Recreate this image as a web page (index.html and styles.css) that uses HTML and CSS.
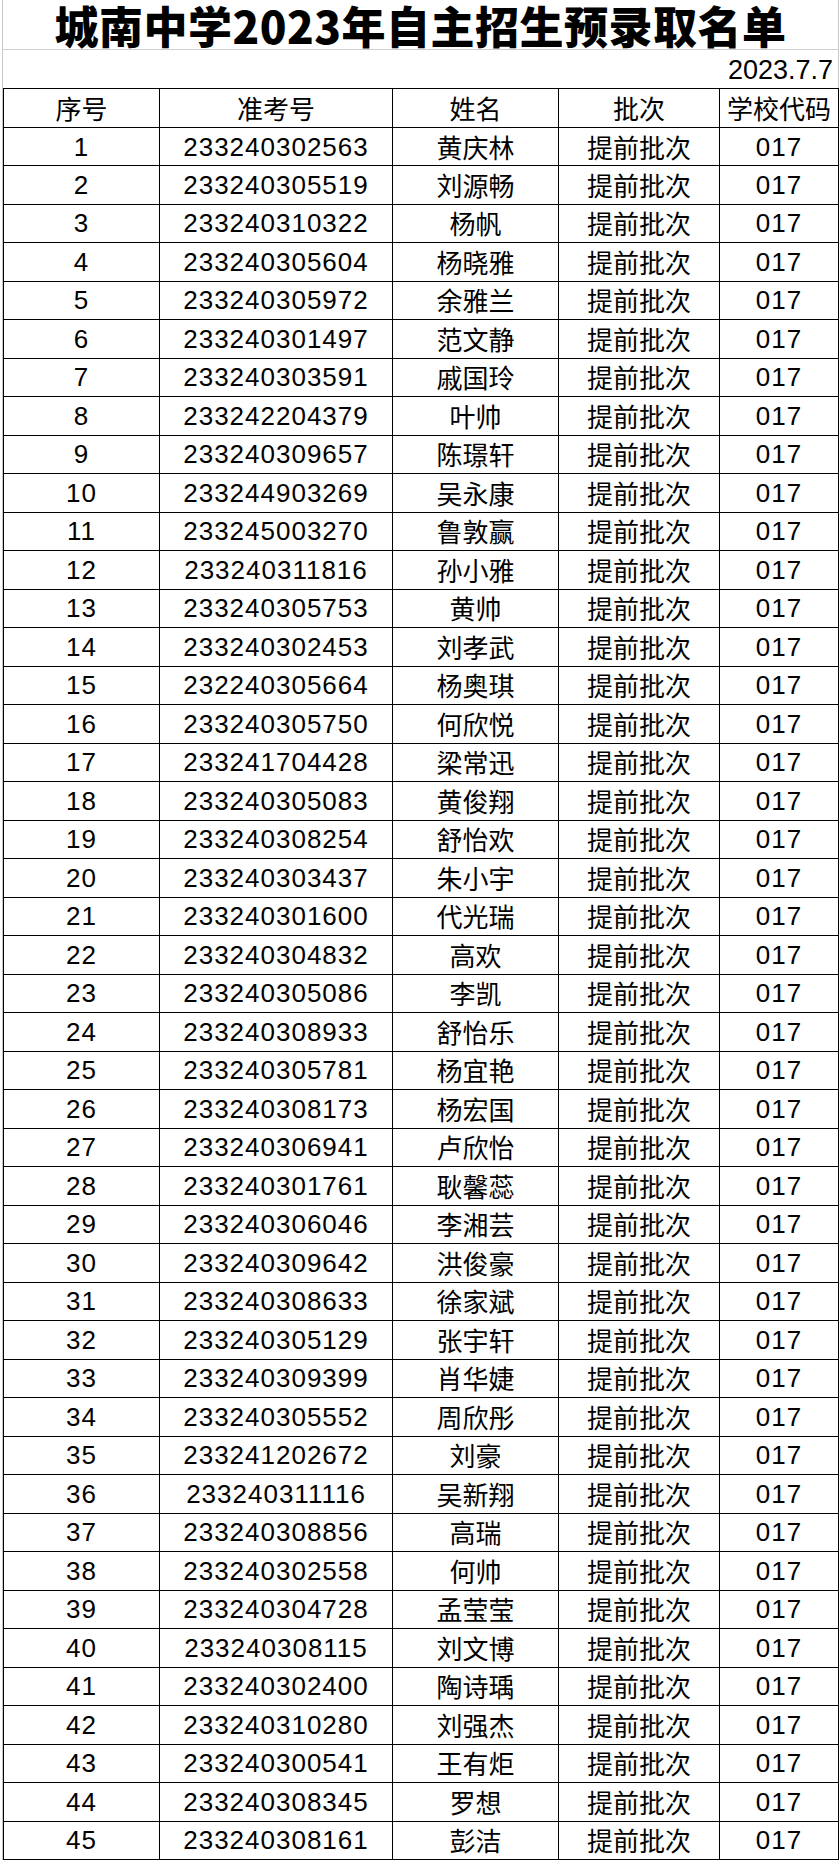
FILE: index.html
```html
<!DOCTYPE html>
<html lang="zh-CN">
<head>
<meta charset="utf-8">
<title>城南中学2023年自主招生预录取名单</title>
<link rel="stylesheet" href="styles.css">
</head>
<body>
<div class="sheet">
  <div class="frame">
    <h1 class="title">城南中学2023年自主招生预录取名单</h1>
    <div class="date">2023.7.7</div>
    <table class="roster">
      <colgroup>
        <col class="c-no"><col class="c-id"><col class="c-name"><col class="c-batch"><col class="c-code">
      </colgroup>
      <thead>
        <tr><th>序号</th><th>准考号</th><th>姓名</th><th>批次</th><th>学校代码</th></tr>
      </thead>
      <tbody>
        <tr><td>1</td><td class="num">233240302563</td><td>黄庆林</td><td>提前批次</td><td class="num">017</td></tr>
        <tr><td>2</td><td class="num">233240305519</td><td>刘源畅</td><td>提前批次</td><td class="num">017</td></tr>
        <tr><td>3</td><td class="num">233240310322</td><td>杨帆</td><td>提前批次</td><td class="num">017</td></tr>
        <tr><td>4</td><td class="num">233240305604</td><td>杨晓雅</td><td>提前批次</td><td class="num">017</td></tr>
        <tr><td>5</td><td class="num">233240305972</td><td>余雅兰</td><td>提前批次</td><td class="num">017</td></tr>
        <tr><td>6</td><td class="num">233240301497</td><td>范文静</td><td>提前批次</td><td class="num">017</td></tr>
        <tr><td>7</td><td class="num">233240303591</td><td>戚国玲</td><td>提前批次</td><td class="num">017</td></tr>
        <tr><td>8</td><td class="num">233242204379</td><td>叶帅</td><td>提前批次</td><td class="num">017</td></tr>
        <tr><td>9</td><td class="num">233240309657</td><td>陈璟轩</td><td>提前批次</td><td class="num">017</td></tr>
        <tr><td>10</td><td class="num">233244903269</td><td>吴永康</td><td>提前批次</td><td class="num">017</td></tr>
        <tr><td>11</td><td class="num">233245003270</td><td>鲁敦赢</td><td>提前批次</td><td class="num">017</td></tr>
        <tr><td>12</td><td class="num">233240311816</td><td>孙小雅</td><td>提前批次</td><td class="num">017</td></tr>
        <tr><td>13</td><td class="num">233240305753</td><td>黄帅</td><td>提前批次</td><td class="num">017</td></tr>
        <tr><td>14</td><td class="num">233240302453</td><td>刘孝武</td><td>提前批次</td><td class="num">017</td></tr>
        <tr><td>15</td><td class="num">232240305664</td><td>杨奥琪</td><td>提前批次</td><td class="num">017</td></tr>
        <tr><td>16</td><td class="num">233240305750</td><td>何欣悦</td><td>提前批次</td><td class="num">017</td></tr>
        <tr><td>17</td><td class="num">233241704428</td><td>梁常迅</td><td>提前批次</td><td class="num">017</td></tr>
        <tr><td>18</td><td class="num">233240305083</td><td>黄俊翔</td><td>提前批次</td><td class="num">017</td></tr>
        <tr><td>19</td><td class="num">233240308254</td><td>舒怡欢</td><td>提前批次</td><td class="num">017</td></tr>
        <tr><td>20</td><td class="num">233240303437</td><td>朱小宇</td><td>提前批次</td><td class="num">017</td></tr>
        <tr><td>21</td><td class="num">233240301600</td><td>代光瑞</td><td>提前批次</td><td class="num">017</td></tr>
        <tr><td>22</td><td class="num">233240304832</td><td>高欢</td><td>提前批次</td><td class="num">017</td></tr>
        <tr><td>23</td><td class="num">233240305086</td><td>李凯</td><td>提前批次</td><td class="num">017</td></tr>
        <tr><td>24</td><td class="num">233240308933</td><td>舒怡乐</td><td>提前批次</td><td class="num">017</td></tr>
        <tr><td>25</td><td class="num">233240305781</td><td>杨宜艳</td><td>提前批次</td><td class="num">017</td></tr>
        <tr><td>26</td><td class="num">233240308173</td><td>杨宏国</td><td>提前批次</td><td class="num">017</td></tr>
        <tr><td>27</td><td class="num">233240306941</td><td>卢欣怡</td><td>提前批次</td><td class="num">017</td></tr>
        <tr><td>28</td><td class="num">233240301761</td><td>耿馨蕊</td><td>提前批次</td><td class="num">017</td></tr>
        <tr><td>29</td><td class="num">233240306046</td><td>李湘芸</td><td>提前批次</td><td class="num">017</td></tr>
        <tr><td>30</td><td class="num">233240309642</td><td>洪俊豪</td><td>提前批次</td><td class="num">017</td></tr>
        <tr><td>31</td><td class="num">233240308633</td><td>徐家斌</td><td>提前批次</td><td class="num">017</td></tr>
        <tr><td>32</td><td class="num">233240305129</td><td>张宇轩</td><td>提前批次</td><td class="num">017</td></tr>
        <tr><td>33</td><td class="num">233240309399</td><td>肖华婕</td><td>提前批次</td><td class="num">017</td></tr>
        <tr><td>34</td><td class="num">233240305552</td><td>周欣彤</td><td>提前批次</td><td class="num">017</td></tr>
        <tr><td>35</td><td class="num">233241202672</td><td>刘豪</td><td>提前批次</td><td class="num">017</td></tr>
        <tr><td>36</td><td class="num">233240311116</td><td>吴新翔</td><td>提前批次</td><td class="num">017</td></tr>
        <tr><td>37</td><td class="num">233240308856</td><td>高瑞</td><td>提前批次</td><td class="num">017</td></tr>
        <tr><td>38</td><td class="num">233240302558</td><td>何帅</td><td>提前批次</td><td class="num">017</td></tr>
        <tr><td>39</td><td class="num">233240304728</td><td>孟莹莹</td><td>提前批次</td><td class="num">017</td></tr>
        <tr><td>40</td><td class="num">233240308115</td><td>刘文博</td><td>提前批次</td><td class="num">017</td></tr>
        <tr><td>41</td><td class="num">233240302400</td><td>陶诗瑀</td><td>提前批次</td><td class="num">017</td></tr>
        <tr><td>42</td><td class="num">233240310280</td><td>刘强杰</td><td>提前批次</td><td class="num">017</td></tr>
        <tr><td>43</td><td class="num">233240300541</td><td>王有炬</td><td>提前批次</td><td class="num">017</td></tr>
        <tr><td>44</td><td class="num">233240308345</td><td>罗想</td><td>提前批次</td><td class="num">017</td></tr>
        <tr><td>45</td><td class="num">233240308161</td><td>彭洁</td><td>提前批次</td><td class="num">017</td></tr>
      </tbody>
    </table>
  </div>
</div>
</body>
</html>
```

FILE: styles.css
```css
html, body {
  margin: 0;
  padding: 0;
  background: #ffffff;
}

body {
  font-family: "Liberation Sans", "Noto Sans CJK SC", sans-serif;
  color: #000000;
}

.sheet {
  width: 840px;
  height: 1860px;
  padding: 0 1px 0 2px;
  box-sizing: border-box;
  overflow: hidden;
}

.frame {
  border-left: 1px solid #c9c9c9;
  border-right: 1px solid #c9c9c9;
  height: 100%;
  box-sizing: border-box;
}

.title {
  margin: 0;
  height: 50px;
  box-sizing: border-box;
  padding-top: 1px;
  border-bottom: 1px solid #cfcfcf;
  font-family: "Noto Sans CJK SC", sans-serif;
  font-weight: 900;
  font-size: 44px;
  line-height: 48px;
  text-align: center;
  letter-spacing: 0.5px;
}

.date {
  height: 38px;
  box-sizing: border-box;
  padding-right: 5px;
  text-align: right;
  font-size: 27px;
  line-height: 40px;
}

.roster {
  width: 835px;
  border-collapse: collapse;
  table-layout: fixed;
}

.c-no { width: 156px; }
.c-id { width: 233px; }
.c-name { width: 166px; }
.c-batch { width: 161px; }
.c-code { width: 119px; }

.roster th,
.roster td {
  height: 38.5px;
  padding: 0;
  border: 1px solid #000000;
  text-align: center;
  vertical-align: middle;
  font-weight: 400;
  font-size: 26px;
  line-height: 26px;
  font-family: "Liberation Sans", "Noto Sans CJK SC", sans-serif;
  white-space: nowrap;
  box-sizing: border-box;
}

.roster th {
  font-family: "Noto Sans CJK SC", sans-serif;
}

.roster td:nth-child(3),
.roster td:nth-child(4) {
  font-family: "Noto Sans CJK SC", sans-serif;
}

.roster td.num,
.roster td:first-child {
  letter-spacing: 1px;
}

.roster tr:first-child td {
  padding-top: 2px;
}
```
